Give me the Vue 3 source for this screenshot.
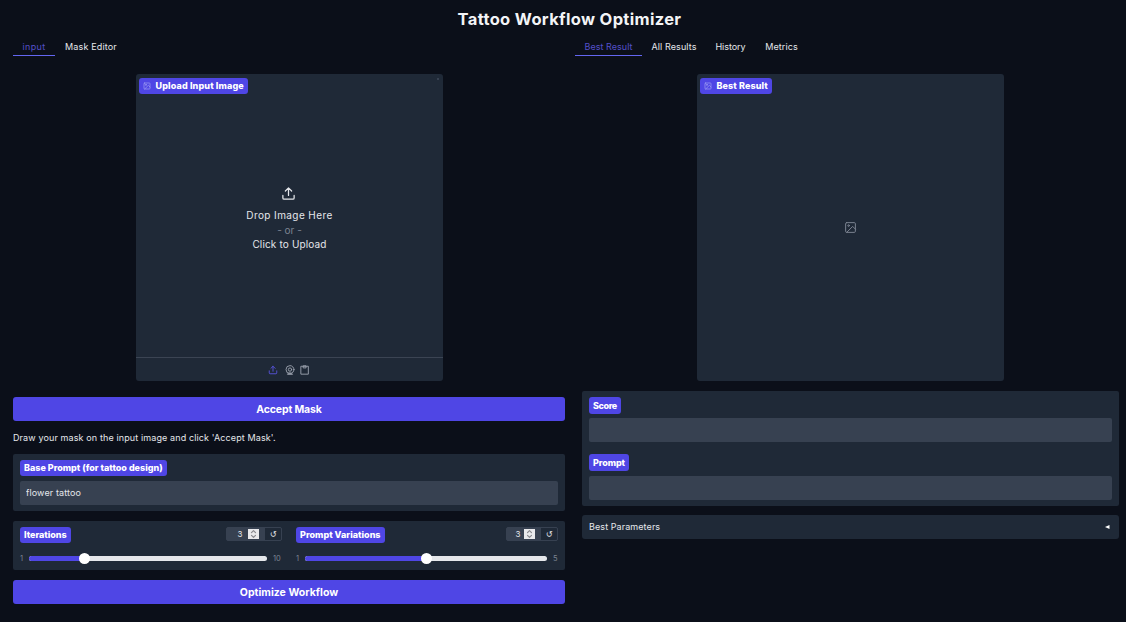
<script setup>
import { ref } from 'vue'

const leftTabs = [
  { name: 'input', width: 42, spacing: 0.3 },
  { name: 'Mask Editor', width: 72, spacing: 0.15 },
]
const rightTabs = [
  { name: 'Best Result', width: 67, spacing: 0.04 },
  { name: 'All Results', width: 64, spacing: 0.1 },
  { name: 'History', width: 49, spacing: -0.05 },
  { name: 'Metrics', width: 53, spacing: 0.08 },
]
const leftTab = ref('input')
const rightTab = ref('Best Result')
const prompt = ref('flower tattoo')
const sliders = [
  { label: 'Iterations', cls: 'iter', value: 3, min: 1, max: 10, fill: 23.5 },
  { label: 'Prompt Variations', cls: 'vars', value: 3, min: 1, max: 5, fill: 50 },
]
</script>

<template>
  <main class="page">
    <h1>Tattoo Workflow Optimizer</h1>
    <div class="columns">
      <section class="left">
        <nav class="tabs">
          <button v-for="t in leftTabs" :key="t.name" :class="{ active: leftTab === t.name }" :style="{ width: t.width + 'px', letterSpacing: t.spacing + 'px' }" @click="leftTab = t.name">{{ t.name }}</button>
        </nav>
        <div class="card image-card">
          <div class="badge icon-badge">
            <svg viewBox="0 0 24 24"><rect x="3" y="3" width="18" height="18" rx="2" /><circle cx="8.5" cy="8.5" r="1.5" /><path d="M21 15l-5-5L5 21" /></svg>
            <span class="t-upload">Upload Input Image</span>
          </div>
          <i class="corner"></i>
          <div class="drop">
            <svg viewBox="0 0 24 24"><path d="M21 15v4a2 2 0 0 1-2 2H5a2 2 0 0 1-2-2v-4M17 8l-5-5-5 5M12 3v12" /></svg>
            <span class="t-drop">Drop Image Here</span>
            <span class="or">- or -</span>
            <span class="t-click">Click to Upload</span>
          </div>
          <div class="sources">
            <svg class="on" viewBox="0 0 24 24"><path d="M21 14v5a2 2 0 0 1-2 2H5a2 2 0 0 1-2-2v-5M17 8l-5-5-5 5M12 3v12" /></svg>
            <svg viewBox="0 0 24 24"><circle cx="12" cy="11" r="9.5" /><circle cx="12" cy="11" r="4" /><path d="M8 20l-2 2.5h12l-2-2.5z" /></svg>
            <svg viewBox="0 0 24 24"><path d="M3 3h17v19H3zM8.500 2h6v5h-6z" /></svg>
          </div>
        </div>
        <button class="primary accept">Accept Mask</button>
        <p class="hint">Draw your mask on the input image and click 'Accept Mask'.</p>
        <div class="card prompt-card">
          <label class="badge"><span class="t-base">Base Prompt (for tattoo design)</span></label>
          <input v-model="prompt" class="field" />
        </div>
        <div class="card sliders">
          <div v-for="s in sliders" :key="s.label" class="slider" :class="s.cls">
            <div class="slider-head">
              <label class="badge"><span :class="'t-' + s.cls">{{ s.label }}</span></label>
              <div class="number">
                <span class="value">{{ s.value }}</span>
                <svg class="spin" viewBox="0 0 11 10"><path d="M3.5 3.7l2-2 2 2M3.5 6.3l2 2 2-2" /></svg>
                <span class="reset">↺</span>
              </div>
            </div>
            <div class="range">
              <span class="min">{{ s.min }}</span>
              <div class="track">
                <div class="fill" :style="{ width: s.fill + '%' }"><b class="thumb"></b></div>
              </div>
              <span class="max">{{ s.max }}</span>
            </div>
          </div>
        </div>
        <button class="primary optimize">Optimize Workflow</button>
      </section>

      <section class="right">
        <nav class="tabs">
          <button v-for="t in rightTabs" :key="t.name" :class="{ active: rightTab === t.name }" :style="{ width: t.width + 'px', letterSpacing: t.spacing + 'px' }" @click="rightTab = t.name">{{ t.name }}</button>
        </nav>
        <div class="card image-card">
          <div class="badge icon-badge">
            <svg viewBox="0 0 24 24"><rect x="3" y="3" width="18" height="18" rx="2" /><circle cx="8.5" cy="8.5" r="1.5" /><path d="M21 15l-5-5L5 21" /></svg>
            <span class="t-best">Best Result</span>
          </div>
          <div class="empty">
            <svg viewBox="0 0 24 24"><rect x="3" y="3" width="18" height="18" rx="2" /><circle cx="8.5" cy="8.5" r="1.5" /><path d="M21 15l-5-5L5 21" /></svg>
          </div>
        </div>
        <div class="card results">
          <label class="badge"><span class="t-score">Score</span></label>
          <div class="field"></div>
          <label class="badge second"><span>Prompt</span></label>
          <div class="field"></div>
        </div>
        <div class="card accordion">
          <span>Best Parameters</span>
          <svg viewBox="0 0 5 4"><path d="M0 2L4.5 0V4z" /></svg>
        </div>
      </section>
    </div>
  </main>
</template>

<style>
body { background: #0b0f19; }
</style>

<style scoped>
* { box-sizing: border-box; }
.page { height: 622px; overflow: hidden; background: #0b0f19; color: #e5e7eb; font-family: Inter, "Open Sans", sans-serif; font-size: 9px; white-space: nowrap; }
button { border: 0; padding: 0; background: none; font-family: inherit; color: inherit; }
svg { flex: none; fill: none; stroke: currentColor; stroke-width: 1.6; stroke-linecap: round; stroke-linejoin: round; }
h1 { margin: 0; height: 38px; line-height: 39px; text-align: center; font-size: 16.5px; font-weight: 700; letter-spacing: 0.33px; color: #f3f4f6; padding-left: 13px; }
.columns { display: grid; grid-template-columns: 552px 537px; column-gap: 17px; padding-left: 13px; }
.tabs { display: flex; height: 18px; }
.right .tabs { margin-left: -7px; }
.tabs button { height: 18px; line-height: 17px; font-size: 9px; text-align: center; border-bottom: 1px solid transparent; }
.tabs .active { color: #5450c9; border-bottom-color: #6366f1; }
.card { background: #1f2937; border-radius: 2px; }
.image-card { position: relative; width: 307px; height: 307px; margin: 18px 0 0 123px; border-radius: 3px; display: flex; flex-direction: column; }
.right .image-card { margin-left: 115px; }
.badge { display: flex; align-items: center; width: max-content; height: 16px; padding: 0 4px 1px; border-radius: 3px; background: #4f46e5; color: #fff; font-size: 9px; font-weight: 800; letter-spacing: -0.1px; }
.icon-badge { position: absolute; left: 3px; top: 4px; }
.icon-badge svg { width: 8px; height: 8px; margin: 1px 4.5px 0 0; stroke-width: 2; color: #a5a4f5; }
.t-upload { letter-spacing: 0.13px; }
.t-best { letter-spacing: 0.1px; }
.t-base { letter-spacing: 0; }
.t-iter { letter-spacing: -0.02px; }
.t-vars { letter-spacing: 0.02px; }
.t-score { letter-spacing: -0.4px; }
.corner { position: absolute; right: 4px; top: 4px; width: 2px; height: 2px; background: #374151; }
.drop { height: 283px; display: flex; flex-direction: column; align-items: center; justify-content: center; padding-top: 7px; font-size: 10px; line-height: 14.5px; }
.drop svg { width: 15px; height: 15px; margin: 0 2px 7px 0; stroke-width: 2; }
.t-drop { letter-spacing: 0.4px; }
.t-click { letter-spacing: 0.15px; }
.or { color: #7c8492; }
.sources { height: 24px; border-top: 1px solid #3b4453; display: flex; justify-content: center; align-items: center; gap: 5px; padding: 1px 2px 0 0; color: #9ca3af; }
.sources svg { width: 10px; height: 10px; stroke-width: 2.2; }
.sources .on { color: #5854dd; margin-right: 2px; }
.primary { display: block; width: 552px; height: 24px; background: #4f46e5; color: #fff; border-radius: 3px; font-size: 10.5px; font-weight: 700; line-height: 25px; }
.accept { margin-top: 16px; letter-spacing: -0.15px; }
.hint { margin: 0; height: 33px; line-height: 33px; font-size: 9px; letter-spacing: 0.12px; }
.prompt-card { height: 57px; padding: 6px 7px; }
.field { display: block; width: 100%; height: 24px; margin: 5px 0 0; padding: 0 6px 1px; border: 0; outline: 0; border-radius: 2px; background: #374151; color: #e5e7eb; font: 9px Inter, sans-serif; letter-spacing: 0.12px; }
.sliders { display: grid; grid-template-columns: 262px 262px; column-gap: 14px; margin-top: 10px; height: 49px; padding: 6px 7px; }
.slider-head { display: flex; justify-content: space-between; height: 16px; }
.number { display: flex; align-items: center; width: 56px; height: 14px; border: 1px solid #374151; border-radius: 2px; background: #374151; font-size: 8px; overflow: hidden; }
.vars .number { width: 52px; }
.value { width: 21px; text-align: center; padding-left: 5px; }
.vars .value { width: 17px; padding-left: 5px; }
.spin { width: 11px; height: 10px; background: #e9e9ec; color: #8a8a8f; stroke-width: 1.2; }
.reset { margin-left: auto; width: 16px; height: 12px; background: #1f2937; text-align: center; font: 8px/13px "DejaVu Sans", sans-serif; }
.range { display: flex; align-items: center; height: 11px; margin-top: 10px; font-size: 7.5px; color: #7c8492; }
.min { width: 9px; }
.track { width: 238px; height: 5px; border-radius: 3px; background: #e5e7eb; }
.vars .track { width: 242px; }
.max { margin-left: 6px; }
.fill { position: relative; height: 5px; border-radius: 3px; background: #4f46e5; }
.thumb { position: absolute; right: -5.5px; top: -3px; width: 11px; height: 11px; border-radius: 50%; background: #fff; }
.optimize { margin-top: 10px; letter-spacing: 0.02px; }
.empty { flex: 1; display: flex; align-items: center; justify-content: center; color: #7c8492; }
.empty svg { width: 13px; height: 13px; stroke-width: 1.8; }
.results { height: 115px; margin-top: 10px; padding: 6px 7px; }
.results .badge { height: 17px; }
.results .field { margin-top: 4px; }
.results .second { margin-top: 12px; padding-bottom: 0; }
.results .second + .field { margin-top: 5px; }
.accordion { display: flex; align-items: center; justify-content: space-between; height: 24px; margin-top: 9px; padding: 0 9px 0 7px; border-radius: 3px; letter-spacing: 0.08px; }
.accordion span { padding-bottom: 1px; }
.accordion svg { width: 5px; height: 4px; fill: #fff; stroke: none; }
</style>
